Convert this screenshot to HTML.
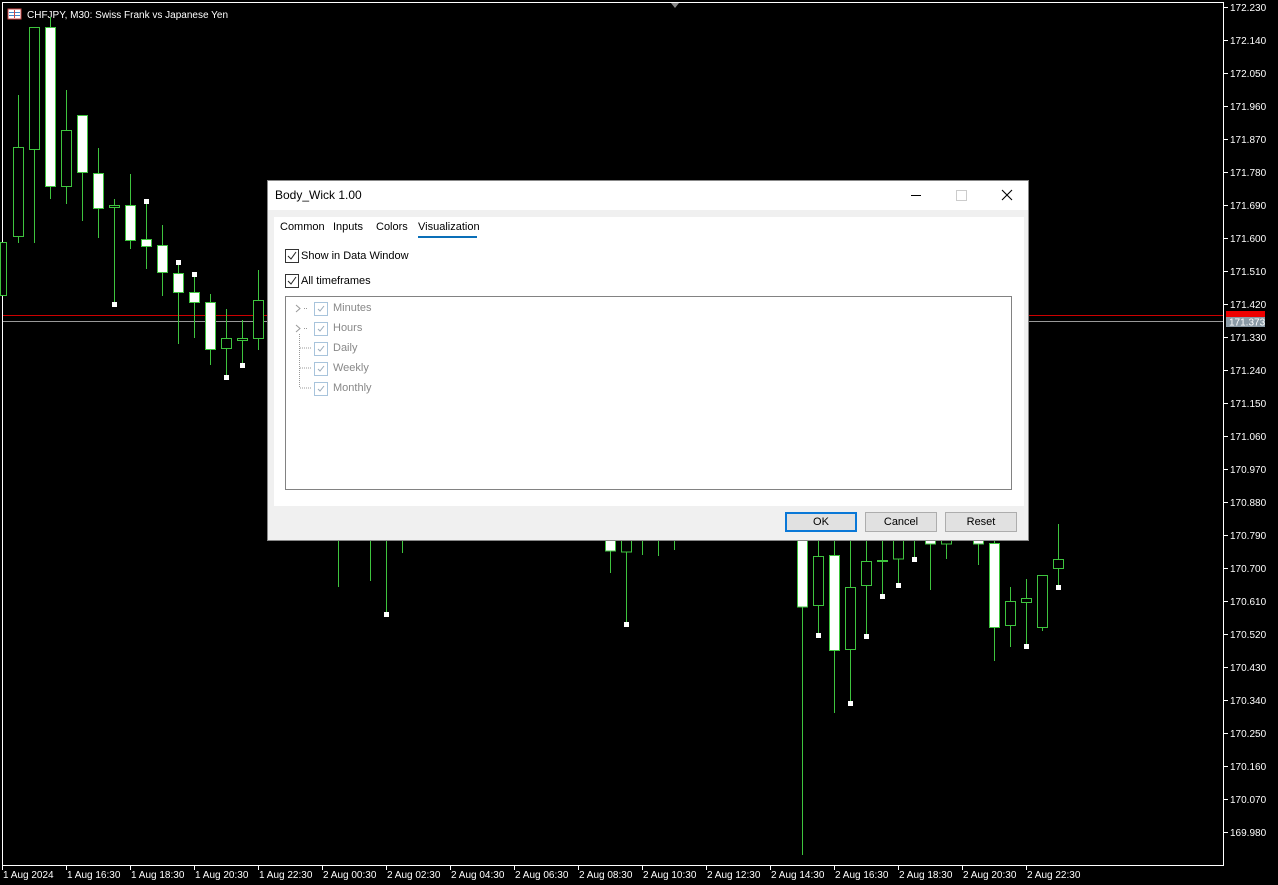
<!DOCTYPE html>
<html><head><meta charset="utf-8"><style>
body{margin:0;width:1278px;height:885px;background:#000;overflow:hidden;position:relative;font-family:"Liberation Sans",sans-serif}
svg{position:absolute;left:0;top:0}
.dlg{position:absolute;left:267px;top:180px;width:762px;height:361px;background:#f0f0f0;border:1px solid #888;box-sizing:border-box}
.tb{height:29px;background:#fff;font-size:12px;line-height:29px;padding-left:7px;color:#000;position:relative}
.panel{position:absolute;left:6px;top:36px;width:750px;height:289px;background:#fff}
.tabs{position:absolute;left:6px;top:0px;font-size:11px;color:#000}
.tabs span{position:absolute;white-space:nowrap}
.cb{position:absolute;width:12px;height:12px;border:1px solid #333;background:#fff}
.cb svg{position:absolute;left:0;top:0}
.lbl{position:absolute;font-size:11px;white-space:nowrap;color:#000}
.list{position:absolute;left:11px;top:79px;width:727px;height:194px;border:1px solid #828282;box-sizing:border-box}
.g{color:#888}
.gcb{position:absolute;width:12px;height:12px;border:1px solid #a8c4dc;background:#fff}
.btn{position:absolute;top:331px;width:72px;height:20px;border:1px solid #adadad;background:#e1e1e1;font-size:11px;text-align:center;line-height:19px;box-sizing:border-box}
</style></head><body>
<svg width="1278" height="885" xmlns="http://www.w3.org/2000/svg">
<g stroke="#fff" stroke-width="1" fill="none" shape-rendering="crispEdges">
<line x1="2.5" y1="2" x2="2.5" y2="866"/>
<line x1="2" y1="2.5" x2="1224" y2="2.5"/>
<line x1="1223.5" y1="2" x2="1223.5" y2="866"/>
<line x1="2" y1="865.5" x2="1224" y2="865.5"/>
</g>
<polygon points="671,3 679,3 675,8" fill="#888"/>
<line x1="3" y1="315.5" x2="1223" y2="315.5" stroke="#c00" shape-rendering="crispEdges"/>
<line x1="3" y1="321.5" x2="1223" y2="321.5" stroke="#999" shape-rendering="crispEdges"/>
<rect x="1226" y="311" width="39" height="6" fill="#e00"/>
<rect x="1226" y="317" width="39" height="10" fill="#8a9aa6"/>
<text x="1229" y="325.5" font-size="10" fill="#fff" font-family="Liberation Sans">171.373</text>
<g font-size="10" fill="#fff" font-family="Liberation Sans" shape-rendering="crispEdges">
<g stroke="#fff">
<line x1="1223" y1="7.5" x2="1228" y2="7.5"/><line x1="1223" y1="40.5" x2="1228" y2="40.5"/><line x1="1223" y1="73.5" x2="1228" y2="73.5"/><line x1="1223" y1="106.5" x2="1228" y2="106.5"/><line x1="1223" y1="139.5" x2="1228" y2="139.5"/><line x1="1223" y1="172.5" x2="1228" y2="172.5"/><line x1="1223" y1="205.5" x2="1228" y2="205.5"/><line x1="1223" y1="238.5" x2="1228" y2="238.5"/><line x1="1223" y1="271.5" x2="1228" y2="271.5"/><line x1="1223" y1="304.5" x2="1228" y2="304.5"/><line x1="1223" y1="337.5" x2="1228" y2="337.5"/><line x1="1223" y1="370.5" x2="1228" y2="370.5"/><line x1="1223" y1="403.5" x2="1228" y2="403.5"/><line x1="1223" y1="436.5" x2="1228" y2="436.5"/><line x1="1223" y1="469.5" x2="1228" y2="469.5"/><line x1="1223" y1="502.5" x2="1228" y2="502.5"/><line x1="1223" y1="535.5" x2="1228" y2="535.5"/><line x1="1223" y1="568.5" x2="1228" y2="568.5"/><line x1="1223" y1="601.5" x2="1228" y2="601.5"/><line x1="1223" y1="634.5" x2="1228" y2="634.5"/><line x1="1223" y1="667.5" x2="1228" y2="667.5"/><line x1="1223" y1="700.5" x2="1228" y2="700.5"/><line x1="1223" y1="733.5" x2="1228" y2="733.5"/><line x1="1223" y1="766.5" x2="1228" y2="766.5"/><line x1="1223" y1="799.5" x2="1228" y2="799.5"/><line x1="1223" y1="832.5" x2="1228" y2="832.5"/>
</g>
<text x="1230" y="11">172.230</text><text x="1230" y="44">172.140</text><text x="1230" y="77">172.050</text><text x="1230" y="110">171.960</text><text x="1230" y="143">171.870</text><text x="1230" y="176">171.780</text><text x="1230" y="209">171.690</text><text x="1230" y="242">171.600</text><text x="1230" y="275">171.510</text><text x="1230" y="308">171.420</text><text x="1230" y="341">171.330</text><text x="1230" y="374">171.240</text><text x="1230" y="407">171.150</text><text x="1230" y="440">171.060</text><text x="1230" y="473">170.970</text><text x="1230" y="506">170.880</text><text x="1230" y="539">170.790</text><text x="1230" y="572">170.700</text><text x="1230" y="605">170.610</text><text x="1230" y="638">170.520</text><text x="1230" y="671">170.430</text><text x="1230" y="704">170.340</text><text x="1230" y="737">170.250</text><text x="1230" y="770">170.160</text><text x="1230" y="803">170.070</text><text x="1230" y="836">169.980</text>
<g stroke="#fff"><line x1="2.5" y1="865" x2="2.5" y2="870"/><line x1="66.5" y1="865" x2="66.5" y2="870"/><line x1="130.5" y1="865" x2="130.5" y2="870"/><line x1="194.5" y1="865" x2="194.5" y2="870"/><line x1="258.5" y1="865" x2="258.5" y2="870"/><line x1="322.5" y1="865" x2="322.5" y2="870"/><line x1="386.5" y1="865" x2="386.5" y2="870"/><line x1="450.5" y1="865" x2="450.5" y2="870"/><line x1="514.5" y1="865" x2="514.5" y2="870"/><line x1="578.5" y1="865" x2="578.5" y2="870"/><line x1="642.5" y1="865" x2="642.5" y2="870"/><line x1="706.5" y1="865" x2="706.5" y2="870"/><line x1="770.5" y1="865" x2="770.5" y2="870"/><line x1="834.5" y1="865" x2="834.5" y2="870"/><line x1="898.5" y1="865" x2="898.5" y2="870"/><line x1="962.5" y1="865" x2="962.5" y2="870"/><line x1="1026.5" y1="865" x2="1026.5" y2="870"/></g>
<text x="3" y="878">1 Aug 2024</text><text x="67" y="878">1 Aug 16:30</text><text x="131" y="878">1 Aug 18:30</text><text x="195" y="878">1 Aug 20:30</text><text x="259" y="878">1 Aug 22:30</text><text x="323" y="878">2 Aug 00:30</text><text x="387" y="878">2 Aug 02:30</text><text x="451" y="878">2 Aug 04:30</text><text x="515" y="878">2 Aug 06:30</text><text x="579" y="878">2 Aug 08:30</text><text x="643" y="878">2 Aug 10:30</text><text x="707" y="878">2 Aug 12:30</text><text x="771" y="878">2 Aug 14:30</text><text x="835" y="878">2 Aug 16:30</text><text x="899" y="878">2 Aug 18:30</text><text x="963" y="878">2 Aug 20:30</text><text x="1027" y="878">2 Aug 22:30</text>
</g>
<rect x="8" y="9" width="13" height="10" fill="#fff" stroke="#c44"/>
<line x1="9" y1="12.5" x2="20" y2="12.5" stroke="#48c"/><line x1="9" y1="15.5" x2="20" y2="15.5" stroke="#48c"/><line x1="14.5" y1="10" x2="14.5" y2="18" stroke="#c44"/>
<text x="27" y="18" font-size="10" fill="#fff" font-family="Liberation Sans">CHFJPY, M30:  Swiss Frank vs Japanese Yen</text>
<g stroke="#3ec43e" stroke-width="1" shape-rendering="crispEdges">
<line x1="18.5" y1="95" x2="18.5" y2="243"/><line x1="34.5" y1="27" x2="34.5" y2="243"/><line x1="50.5" y1="17" x2="50.5" y2="199"/><line x1="66.5" y1="90" x2="66.5" y2="204"/><line x1="82.5" y1="115" x2="82.5" y2="221"/><line x1="98.5" y1="148" x2="98.5" y2="238"/><line x1="114.5" y1="199" x2="114.5" y2="305"/><line x1="130.5" y1="174" x2="130.5" y2="249"/><line x1="146.5" y1="201" x2="146.5" y2="269"/><line x1="162.5" y1="225" x2="162.5" y2="296"/><line x1="178.5" y1="262" x2="178.5" y2="344"/><line x1="194.5" y1="274" x2="194.5" y2="338"/><line x1="210.5" y1="294" x2="210.5" y2="365"/><line x1="226.5" y1="309" x2="226.5" y2="377"/><line x1="242.5" y1="320" x2="242.5" y2="365"/><line x1="258.5" y1="270" x2="258.5" y2="350"/>
<line x1="338.5" y1="540" x2="338.5" y2="587"/><line x1="370.5" y1="540" x2="370.5" y2="581"/><line x1="386.5" y1="540" x2="386.5" y2="614"/><line x1="402.5" y1="540" x2="402.5" y2="553"/><line x1="610.5" y1="540" x2="610.5" y2="573"/><line x1="626.5" y1="540" x2="626.5" y2="624"/><line x1="642.5" y1="540" x2="642.5" y2="555"/><line x1="658.5" y1="540" x2="658.5" y2="556"/><line x1="674.5" y1="540" x2="674.5" y2="550"/>
<line x1="802.5" y1="540" x2="802.5" y2="855"/><line x1="818.5" y1="540" x2="818.5" y2="635"/><line x1="834.5" y1="540" x2="834.5" y2="713"/><line x1="850.5" y1="540" x2="850.5" y2="703"/><line x1="866.5" y1="540" x2="866.5" y2="636"/><line x1="882.5" y1="540" x2="882.5" y2="596"/><line x1="898.5" y1="540" x2="898.5" y2="585"/><line x1="914.5" y1="540" x2="914.5" y2="559"/><line x1="930.5" y1="540" x2="930.5" y2="590"/><line x1="946.5" y1="540" x2="946.5" y2="559"/><line x1="978.5" y1="540" x2="978.5" y2="565"/><line x1="994.5" y1="540" x2="994.5" y2="661"/><line x1="1010.5" y1="587" x2="1010.5" y2="647"/><line x1="1026.5" y1="579" x2="1026.5" y2="646"/><line x1="1042.5" y1="575" x2="1042.5" y2="631"/><line x1="1058.5" y1="524" x2="1058.5" y2="587"/>
</g>
<g stroke="#3ec43e" stroke-width="1" fill="#000" shape-rendering="crispEdges">
<rect x="0.5" y="242.5" width="6" height="53"/>
<rect x="13.5" y="147.5" width="10" height="89"/><rect x="29.5" y="27.5" width="10" height="122"/><rect x="61.5" y="130.5" width="10" height="56"/><rect x="221.5" y="338.5" width="10" height="10"/><rect x="253.5" y="300.5" width="10" height="38"/>
<rect x="621.5" y="538" width="10" height="14"/>
<rect x="813.5" y="556.5" width="10" height="49"/><rect x="845.5" y="587.5" width="10" height="62"/><rect x="861.5" y="561.5" width="10" height="24"/><rect x="893.5" y="538" width="10" height="21"/><rect x="941.5" y="538" width="10" height="6"/><rect x="1005.5" y="601.5" width="10" height="24"/><rect x="1037.5" y="575.5" width="10" height="52"/><rect x="1053.5" y="559.5" width="10" height="9"/><rect x="1021.5" y="598.5" width="10" height="4"/><rect x="237.5" y="338.5" width="10" height="2"/><rect x="109.5" y="205.5" width="10" height="2"/><rect x="877.5" y="560.5" width="10" height="1"/>
</g>
<g stroke="#3ec43e" stroke-width="1" fill="#fff" shape-rendering="crispEdges">
<rect x="45.5" y="27.5" width="10" height="159"/><rect x="77.5" y="115.5" width="10" height="57"/><rect x="93.5" y="173.5" width="10" height="35"/><rect x="125.5" y="205.5" width="10" height="35"/><rect x="141.5" y="239.5" width="10" height="7"/><rect x="157.5" y="245.5" width="10" height="27"/><rect x="173.5" y="273.5" width="10" height="19"/><rect x="189.5" y="292.5" width="10" height="10"/><rect x="205.5" y="302.5" width="10" height="47"/>
<rect x="605.5" y="538" width="10" height="13"/><rect x="797.5" y="538" width="10" height="69"/><rect x="829.5" y="555.5" width="10" height="95"/><rect x="925.5" y="538" width="10" height="6"/><rect x="973.5" y="538" width="10" height="6"/><rect x="989.5" y="543.5" width="10" height="84"/>
</g>
<g fill="#fff">
<rect x="112" y="302" width="5" height="5"/><rect x="144" y="199" width="5" height="5"/><rect x="176" y="260" width="5" height="5"/><rect x="192" y="272" width="5" height="5"/><rect x="224" y="375" width="5" height="5"/><rect x="240" y="363" width="5" height="5"/><rect x="384" y="612" width="5" height="5"/><rect x="624" y="622" width="5" height="5"/><rect x="816" y="633" width="5" height="5"/><rect x="848" y="701" width="5" height="5"/><rect x="864" y="634" width="5" height="5"/><rect x="880" y="594" width="5" height="5"/><rect x="896" y="583" width="5" height="5"/><rect x="912" y="557" width="5" height="5"/><rect x="1024" y="644" width="5" height="5"/><rect x="1056" y="585" width="5" height="5"/>
</g>
</svg>
<div class="dlg">
<div class="tb">Body_Wick 1.00
<div style="position:absolute;left:643px;top:14px;width:10px;height:1px;background:#000"></div>
<div style="position:absolute;left:688px;top:9px;width:9px;height:9px;border:1px solid #ccc"></div>
<svg width="12" height="12" style="left:733px;top:8px"><path d="M1 1L11 11M11 1L1 11" stroke="#000" stroke-width="1.1"/></svg>
</div>
<div class="panel">
<div class="tabs"><span style="left:0;top:4px">Common</span><span style="left:53px;top:4px">Inputs</span><span style="left:96px;top:4px">Colors</span><span style="left:138px;top:4px">Visualization</span>
<div style="position:absolute;left:138px;top:19px;width:59px;height:2px;background:#0a6fb8"></div></div>
<div class="cb" style="left:11px;top:32px"><svg width="12" height="12"><path d="M2 6L5 9L10 2" stroke="#222" fill="none"/></svg></div>
<div class="lbl" style="left:27px;top:33px">Show in Data Window</div>
<div class="cb" style="left:11px;top:57px"><svg width="12" height="12"><path d="M2 6L5 9L10 2" stroke="#222" fill="none"/></svg></div>
<div class="lbl" style="left:27px;top:58px">All timeframes</div>
<div class="list">
<svg width="60" height="100" style="left:0;top:0"><g stroke="#999" fill="none"><path d="M10 8L14 11.5L10 15"/><path d="M10 28L14 31.5L10 35"/><path d="M13.5 37V91M14 51H25M14 71H25M14 91H25M18 11.5H22M18 31.5H22" stroke-dasharray="1 1"/></g></svg>
<div class="gcb" style="left:28px;top:5px"><svg width="12" height="12"><path d="M3 6L5 8L9 3" stroke="#9ab" fill="none"/></svg></div><div class="lbl g" style="left:47px;top:5px">Minutes</div>
<div class="gcb" style="left:28px;top:25px"><svg width="12" height="12"><path d="M3 6L5 8L9 3" stroke="#9ab" fill="none"/></svg></div><div class="lbl g" style="left:47px;top:25px">Hours</div>
<div class="gcb" style="left:28px;top:45px"><svg width="12" height="12"><path d="M3 6L5 8L9 3" stroke="#9ab" fill="none"/></svg></div><div class="lbl g" style="left:47px;top:45px">Daily</div>
<div class="gcb" style="left:28px;top:65px"><svg width="12" height="12"><path d="M3 6L5 8L9 3" stroke="#9ab" fill="none"/></svg></div><div class="lbl g" style="left:47px;top:65px">Weekly</div>
<div class="gcb" style="left:28px;top:85px"><svg width="12" height="12"><path d="M3 6L5 8L9 3" stroke="#9ab" fill="none"/></svg></div><div class="lbl g" style="left:47px;top:85px">Monthly</div>
</div>
</div>
<div class="btn" style="left:517px;border:2px solid #0a78d7;line-height:17px">OK</div>
<div class="btn" style="left:597px">Cancel</div>
<div class="btn" style="left:677px">Reset</div>
</div>
</body></html>
